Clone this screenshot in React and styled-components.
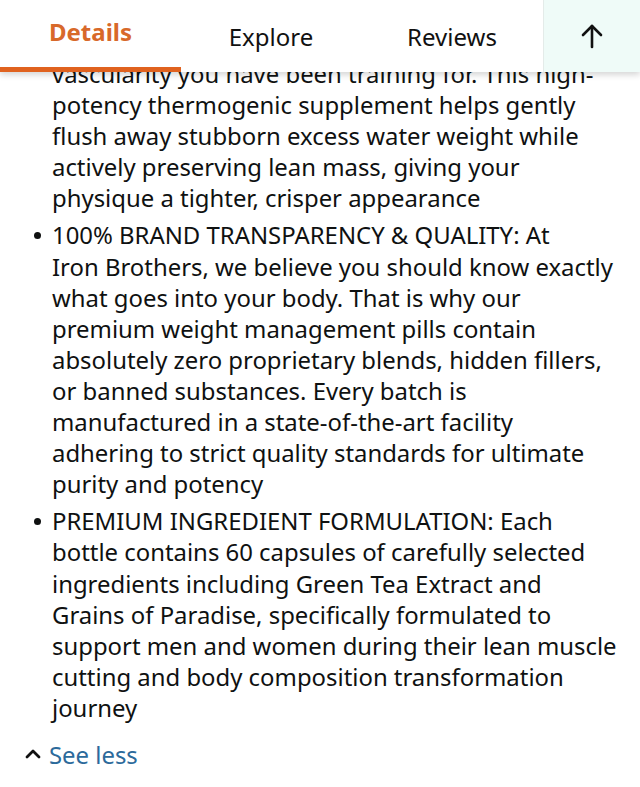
import React from "react";
import styled, { createGlobalStyle } from "styled-components";

const GlobalStyle = createGlobalStyle`
  html, body {
    margin: 0;
    padding: 0;
    background: #ffffff;
  }
  body {
    font-family: "Noto Sans", "Open Sans", Arial, sans-serif;
    color: #0f1111;
  }
`;

const Page = styled.div`
  position: relative;
  width: 640px;
  height: 787px;
  overflow: hidden;
  background: #fff;
`;

const TabBar = styled.div`
  position: absolute;
  top: 0;
  left: 0;
  right: 0;
  height: 72px;
  display: flex;
  align-items: stretch;
  background: #fff;
  box-shadow: 0 3px 6px rgba(0, 0, 0, 0.16);
  z-index: 2;
`;

const Tab = styled.div`
  position: relative;
  width: ${(p) => p.$width}px;
  display: flex;
  align-items: center;
  justify-content: center;
  padding-bottom: ${(p) => (p.$active ? 9 : 0)}px;
  font-size: 24px;
  font-weight: ${(p) => (p.$active ? 700 : 400)};
  color: ${(p) => (p.$active ? "#d8692a" : "#111")};

  &::after {
    content: "";
    display: ${(p) => (p.$active ? "block" : "none")};
    position: absolute;
    left: 0;
    right: 0;
    bottom: 0;
    height: 5px;
    background: #e0621f;
  }
`;

const UpButton = styled.div`
  margin-left: auto;
  width: 96px;
  display: flex;
  align-items: center;
  justify-content: center;
  background: #effbf8;
  border-left: 1px solid #e4ebe9;
`;

const Content = styled.div`
  padding: 58px 0 0 33px;
`;

const List = styled.ul`
  margin: 0;
  padding: 0;
  list-style: none;
  display: flex;
  flex-direction: column;
  gap: 6px;
`;

const Item = styled.li`
  position: relative;
  padding-left: 19px;
  font-size: 23.9px;
  line-height: 31.1px;
  color: #0f1111;

  &::before {
    content: "";
    display: ${(p) => (p.$continued ? "none" : "block")};
    position: absolute;
    left: 1px;
    top: 13px;
    width: 7px;
    height: 7px;
    border-radius: 50%;
    background: #0f1111;
  }
`;

const Line = styled.span`
  display: block;
  white-space: nowrap;
`;

const SeeLess = styled.div`
  display: flex;
  align-items: center;
  gap: 8px;
  margin: 16px 0 0 -8px;
  font-size: 23.9px;
  line-height: 31px;
  color: #2c6a9b;
`;

const items = [
  {
    continued: true,
    lines: [
      "vascularity you have been training for. This high-",
      "potency thermogenic supplement helps gently",
      "flush away stubborn excess water weight while",
      "actively preserving lean mass, giving your",
      "physique a tighter, crisper appearance",
    ],
  },
  {
    lines: [
      "100% BRAND TRANSPARENCY & QUALITY: At",
      "Iron Brothers, we believe you should know exactly",
      "what goes into your body. That is why our",
      "premium weight management pills contain",
      "absolutely zero proprietary blends, hidden fillers,",
      "or banned substances. Every batch is",
      "manufactured in a state-of-the-art facility",
      "adhering to strict quality standards for ultimate",
      "purity and potency",
    ],
  },
  {
    lines: [
      "PREMIUM INGREDIENT FORMULATION: Each",
      "bottle contains 60 capsules of carefully selected",
      "ingredients including Green Tea Extract and",
      "Grains of Paradise, specifically formulated to",
      "support men and women during their lean muscle",
      "cutting and body composition transformation",
      "journey",
    ],
  },
];

const App = () => {
  return (
    <Page>
      <GlobalStyle />
      <TabBar>
        <Tab $active $width={181}>Details</Tab>
        <Tab $width={180}>Explore</Tab>
        <Tab $width={182}>Reviews</Tab>
        <UpButton>
          <svg width="24" height="26" viewBox="0 0 24 26" fill="none" stroke="#111" strokeWidth="2.6" strokeLinecap="round" strokeLinejoin="round">
            <path d="M12 24V3" />
            <path d="M3 12l9-9 9 9" />
          </svg>
        </UpButton>
      </TabBar>
      <Content>
        <List>
          {items.map((item, i) => (
            <Item key={i} $continued={item.continued}>
              {item.lines.map((line, j) => (
                <Line key={j}>{line}</Line>
              ))}
            </Item>
          ))}
        </List>
        <SeeLess>
          <svg width="16" height="12" viewBox="0 0 16 12" fill="none" stroke="#111" strokeWidth="2.8" strokeLinecap="round" strokeLinejoin="round">
            <path d="M2 9l6-6 6 6" />
          </svg>
          See less
        </SeeLess>
      </Content>
    </Page>
  );
};

export default App;
